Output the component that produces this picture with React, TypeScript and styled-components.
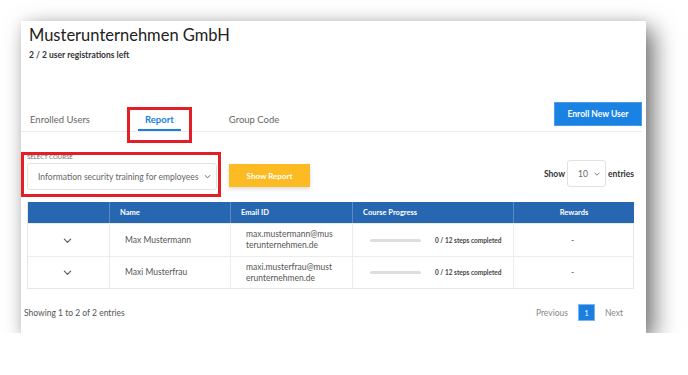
import React from 'react'
import styled, { createGlobalStyle } from 'styled-components'

const GlobalStyle = createGlobalStyle`
    body {
        margin: 0;
        background: #fff;
        font-family: Lato, "Open Sans", sans-serif;
        color: #333;
    }
`

const Page = styled.div`
    padding: 21px 0 0 21px;
`

const Card = styled.div`
    width: 625px;
    height: 312px;
    background: #fff;
    box-shadow: 8px 8px 22px rgba(0, 0, 0, 0.55), 0 0 10px rgba(0, 0, 0, 0.08);
    display: flex;
    flex-direction: column;
    & > * {
        flex-shrink: 0;
    }
`

const Header = styled.div`
    padding: 3px 8px 0;
    height: 80px;
    box-sizing: border-box;
`

const Title = styled.h1`
    margin: 0;
    font-size: 16.5px;
    line-height: 22px;
    font-weight: 400;
    color: #222;
`

const SubTitle = styled.div`
    font-size: 8.5px;
    font-weight: 700;
    margin-top: 4px;
    color: #333;
`

const TabBar = styled.div`
    display: flex;
    align-items: flex-end;
    justify-content: space-between;
    margin-right: 4px;
    border-bottom: 1px solid #ececec;
    height: 31px;
    box-sizing: border-box;
`

const TabList = styled.div`
    display: flex;
    gap: 41px;
    padding-left: 2px;
`

const Tab = styled.div<{ $active?: boolean }>`
    position: relative;
    box-sizing: border-box;
    height: 24px;
    padding: 6px 7px 0;
    line-height: 14px;
    font-size: 9.5px;
    font-weight: ${p => (p.$active ? 700 : 400)};
    color: ${p => (p.$active ? '#1a7fe0' : '#666')};
    border-bottom: 2px solid ${p => (p.$active ? '#1a7fe0' : 'transparent')};
`

const Highlight = styled.div<{ $t: number; $r: number; $b: number; $l: number }>`
    position: absolute;
    top: ${p => p.$t}px;
    right: ${p => p.$r}px;
    bottom: ${p => p.$b}px;
    left: ${p => p.$l}px;
    border: 3px solid #e41e26;
    pointer-events: none;
`

const PrimaryButton = styled.button`
    background: #1a82e2;
    color: #fff;
    border: 1px solid #4a9be6;
    font-family: inherit;
    font-weight: 700;
    font-size: 8.5px;
    width: 88px;
    height: 24px;
    margin-bottom: 5px;
    padding: 0;
`

const Content = styled.div`
    padding: 0 12px 0 6px;
`

const FilterRow = styled.div`
    display: flex;
    align-items: flex-end;
    height: 70px;
    box-sizing: border-box;
    padding-bottom: 12px;
`

const CourseField = styled.div`
    position: relative;
    width: 190px;
`

const FieldLabel = styled.div`
    font-size: 6px;
    color: #666;
    text-transform: uppercase;
    line-height: 8px;
    margin-bottom: 2px;
`

const SelectBox = styled.div<{ $w: number }>`
    width: ${p => p.$w}px;
    height: 27px;
    box-sizing: border-box;
    border: 1px solid #e2e2e2;
    border-radius: 3px;
    display: flex;
    align-items: center;
    justify-content: space-between;
    padding: 0 5px 0 10px;
    font-size: 8.5px;
    font-weight: 400;
    color: #666;
`

const YellowButton = styled.button`
    margin: 0 0 3px 12px;
    width: 81px;
    height: 23px;
    background: #fcbb22;
    border: none;
    color: #fff;
    font-family: inherit;
    font-weight: 700;
    font-size: 8px;
    box-shadow: 0 2px 4px rgba(0, 0, 0, 0.15);
    padding: 0;
`

const Entries = styled.div`
    margin: 0 0 3px auto;
    display: flex;
    align-items: center;
    gap: 2px;
    font-size: 8.5px;
    font-weight: 700;
    color: #333;
`

const Table = styled.div`
    display: grid;
    grid-template-columns: 81px 121px 122px 161px 121px;
    border: 1px solid #e6e6e6;
    border-top: none;
`

const HeadCell = styled.div<{ $center?: boolean }>`
    background: #2767b1;
    color: #fff;
    font-size: 7.5px;
    font-weight: 700;
    height: 21px;
    display: flex;
    align-items: center;
    justify-content: ${p => (p.$center ? 'center' : 'flex-start')};
    padding-left: ${p => (p.$center ? 0 : 10)}px;
    border-left: 1px solid #5a8bc7;
    &:first-child {
        border-left: none;
    }
`

const Cell = styled.div<{ $center?: boolean; $h: number }>`
    box-sizing: border-box;
    height: ${p => p.$h}px;
    display: flex;
    align-items: center;
    justify-content: ${p => (p.$center ? 'center' : 'flex-start')};
    padding: 0 18px 0 15px;
    font-size: 8.5px;
    line-height: 11px;
    color: #555;
    border-left: 1px solid #ececec;
    border-top: 1px solid #ececec;
    &:nth-child(5n + 1) {
        border-left: none;
    }
`

const Email = styled.span`
    word-break: break-all;
`

const Progress = styled.div`
    display: flex;
    align-items: center;
    gap: 14px;
    padding-left: 2px;
    white-space: nowrap;
`

const Track = styled.div`
    width: 51px;
    height: 3px;
    border-radius: 2px;
    background: #dedede;
`

const Steps = styled.span`
    font-size: 6.5px;
    font-weight: 700;
    color: #444;
`

const Footer = styled.div`
    display: flex;
    align-items: center;
    justify-content: space-between;
    padding: 3px 23px 0 3px;
    height: 44px;
    box-sizing: border-box;
    font-size: 8.5px;
    color: #555;
`

const Pager = styled.div`
    display: flex;
    align-items: center;
    gap: 10px;
    color: #888;
`

const PageNum = styled.div`
    width: 17px;
    height: 17px;
    background: #1a7fe0;
    border: 1px solid #7fb5ec;
    box-sizing: border-box;
    color: #fff;
    font-size: 7px;
    display: flex;
    align-items: center;
    justify-content: center;
`

const Chevron: React.FC<{ size?: number }> = ({ size = 8 }) => (
    <svg width={size} height={size} viewBox="0 0 10 10" fill="none">
        <path d="M1.5 3.5 L5 7 L8.5 3.5" stroke="#555" strokeWidth="1.3" strokeLinecap="round" strokeLinejoin="round" />
    </svg>
)

const users = [
    { name: 'Max Mustermann', email: 'max.mustermann@musterunternehmen.de', h: 33 },
    { name: 'Maxi Musterfrau', email: 'maxi.musterfrau@musterunternehmen.de', h: 32 },
]

const App: React.FC = () => {
    return (
        <Page>
            <GlobalStyle />
            <Card>
                <Header>
                    <Title>Musterunternehmen GmbH</Title>
                    <SubTitle>2 / 2 user registrations left</SubTitle>
                </Header>
                <TabBar>
                    <TabList>
                        <Tab>Enrolled Users</Tab>
                        <Tab $active>
                            Report
                            <Highlight $t={0} $r={-11} $b={-14} $l={-11} />
                        </Tab>
                        <Tab>Group Code</Tab>
                    </TabList>
                    <PrimaryButton>Enroll New User</PrimaryButton>
                </TabBar>
                <Content>
                    <FilterRow>
                        <CourseField>
                            <FieldLabel>Select Course</FieldLabel>
                            <SelectBox $w={190}>
                                Information security training for employees
                                <Chevron size={7} />
                            </SelectBox>
                            <Highlight $t={-1} $r={-4} $b={-7} $l={-6} />
                        </CourseField>
                        <YellowButton>Show Report</YellowButton>
                        <Entries>
                            Show
                            <SelectBox $w={39}>
                                10
                                <Chevron size={6} />
                            </SelectBox>
                            entries
                        </Entries>
                    </FilterRow>
                    <Table>
                        <HeadCell />
                        <HeadCell>Name</HeadCell>
                        <HeadCell>Email ID</HeadCell>
                        <HeadCell>Course Progress</HeadCell>
                        <HeadCell $center>Rewards</HeadCell>
                        {users.map(u => (
                            <React.Fragment key={u.name}>
                                <Cell $center $h={u.h}>
                                    <Chevron size={9} />
                                </Cell>
                                <Cell $h={u.h}>{u.name}</Cell>
                                <Cell $h={u.h}>
                                    <Email>{u.email}</Email>
                                </Cell>
                                <Cell $h={u.h}>
                                    <Progress>
                                        <Track />
                                        <Steps>0 / 12 steps completed</Steps>
                                    </Progress>
                                </Cell>
                                <Cell $center $h={u.h}>-</Cell>
                            </React.Fragment>
                        ))}
                    </Table>
                </Content>
                <Footer>
                    <span>Showing 1 to 2 of 2 entries</span>
                    <Pager>
                        <span>Previous</span>
                        <PageNum>1</PageNum>
                        <span>Next</span>
                    </Pager>
                </Footer>
            </Card>
        </Page>
    )
}

export default App
